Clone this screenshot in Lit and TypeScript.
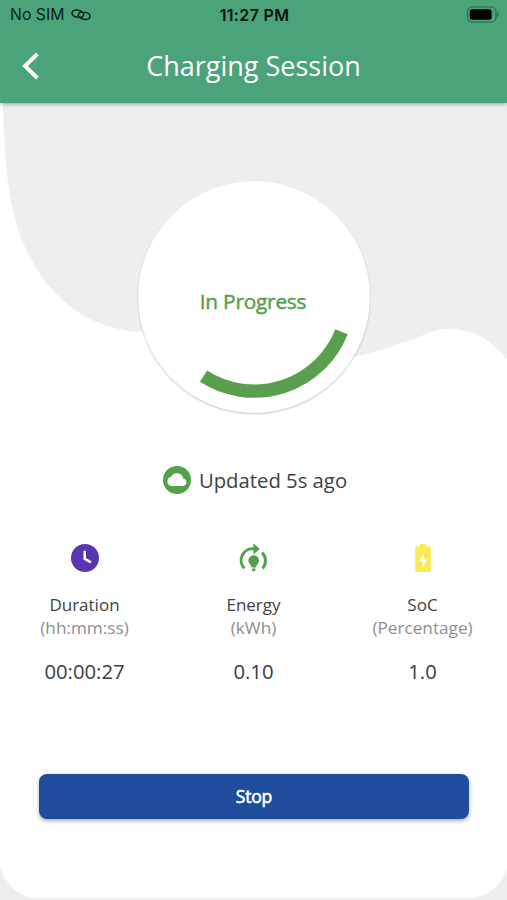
import { LitElement, html, css, svg } from "lit";
import { customElement, property } from "lit/decorators.js";

const clockIcon = svg`<circle cx="14" cy="14" r="14" fill="#5b35b0"/><path d="M13.700 6.800v8l6.200 3.600" fill="none" stroke="#fff" stroke-width="2.500"/>`;

const energyIcon = svg`<g fill="none" stroke="#549f49" stroke-width="3"><path d="M4.400 24.400A11.500 11.500 0 0 1 14.500 5"/><path d="M22 8.600A11.500 11.500 0 0 1 22.600 24.400"/></g><path d="M13.400-.8l6.400 5.700-6.400 5.700z" fill="#549f49"/><path d="M13.700 11.200a5.300 5.300 0 0 1 5.300 5.300c0 3.100-2.900 4.500-3.200 7.100h-4.200c-.3-2.600-3.200-4-3.200-7.100a5.300 5.300 0 0 1 5.300-5.300z" fill="#549f49"/><path d="M12 24.600h3.400v1.100a1.700 1.700 0 0 1-3.400 0z" fill="#549f49"/>`;

const batteryIcon = svg`<path d="M10.800 0h6v2.200h3.400a1.600 1.600 0 0 1 1.600 1.600v22.600a1.600 1.600 0 0 1-1.600 1.600H7.800a1.600 1.600 0 0 1-1.600-1.600V3.800a1.600 1.600 0 0 1 1.600-1.600h3z" fill="#fbea57"/><path d="M14.900 9.200v6.200h3.300l-4.800 8.500v-6.600H9.900z" fill="#fff"/>`;

@customElement("session-metric")
class SessionMetric extends LitElement {
  @property() label = "";
  @property() unit = "";
  @property() value = "";
  static styles = css`
    :host { display: flex; flex-direction: column; align-items: center; flex: 1; white-space: nowrap; }
    .label { margin-top: 20px; font-size: 17px; line-height: 23px; color: #424242; }
    .unit { font-size: 17.200px; line-height: 23px; color: #8e8e8e; }
    .value { margin-top: 17px; margin-bottom: 1px; font-size: 20.300px; line-height: 30px; color: #3c3c3c; }
    .icon { display: block; height: 29px; }
  `;
  render() {
    return html`<div class="icon"><slot></slot></div>
      <div class="label">${this.label}</div>
      <div class="unit">${this.unit}</div>
      <div class="value">${this.value}</div>`;
  }
}

@customElement("app-root")
class AppRoot extends LitElement {
  static styles = css`
    :host { display: block; font-family: "Open Sans", sans-serif; }
    * { box-sizing: border-box; }
    .screen { position: relative; isolation: isolate; height: 900px; overflow: hidden; background: #eee; display: flex; flex-direction: column; }
    .backdrop { position: absolute; inset: 0; z-index: -1; }
    header { height: 103px; flex: none; background: #4ba379; box-shadow: 0 1px 4px rgba(0,0,0,.35); }
    .status { height: 30px; display: grid; grid-template-columns: 1fr auto 1fr; align-items: center; padding: 0 8px 0 10px; font: 400 15.800px/30px Inter, sans-serif; color: #0b2419; }
    .carrier { display: flex; align-items: center; gap: 7px; }
    .time { font-weight: 600; font-size: 16px; letter-spacing: .35px; color: #06150e; }
    .battery { justify-self: end; display: block; transform: translateY(-1px); }
    .bar { height: 73px; padding-bottom: 2px; display: grid; grid-template-columns: 60px 1fr 60px; align-items: center; color: #fff; }
    .back { margin-left: 20px; display: block; }
    h1 { margin: 0; font-size: 27px; font-weight: 400; line-height: 36px; text-align: center; white-space: nowrap; }
    main { display: flex; flex-direction: column; flex: 1; }
    .dial { width: 232px; height: 232px; margin: 78px auto 0; border-radius: 50%; background: #fff; box-shadow: 0 1px 2px rgba(0,0,0,.24); display: grid; place-items: center; }
    .dial > * { grid-area: 1 / 1; }
    .state { padding-top: 8px; margin-left: -1px; font-size: 20.800px; letter-spacing: -.2px; line-height: 28px; color: #549f49; -webkit-text-stroke: .45px #549f49; }
    .updated { margin-top: 50px; height: 34px; display: flex; justify-content: center; align-items: center; gap: 8px; padding-left: 3px; font-size: 20.300px; line-height: 32px; color: #3f3f3f; }
    .updated span { padding-bottom: 1px; }
    .metrics { display: flex; margin-top: 47px; }
    svg { display: block; }
    .stop { margin: 87px 38px 0 39px; padding: 0 0 2px; height: 45px; border: 0; border-radius: 8px; background: #1f4c9c; color: #fff; font: 400 17.500px/24px "Open Sans", sans-serif; -webkit-text-stroke: .6px #fff; letter-spacing: -.2px; box-shadow: 0 2px 4px rgba(0,0,0,.32); }
  `;

  render() {
    return html`<div class="screen">
      <svg class="backdrop" width="507" height="900" viewBox="0 0 507 900">
        <path fill="#fff" d="M0 100H3C4 165 9 212 25 247C51 304 93 330 143 332C220 360 290 374 357 356C380 351 404 343 431 332Q450 325 474 333Q494 342 507 360V868C502 885 489 897 469 898H37C18 897 5 883 1 868H0Z"/>
      </svg>
      <header>
        <div class="status">
          <div class="carrier"><span>No SIM</span>
            <svg width="20" height="14" viewBox="0 0 20 14" fill="none" stroke="#0b2419" stroke-width="1.500" stroke-linecap="round">
              <path d="M6.500 9.200C3 9 .9 7 1 4.800C1.200 2.300 4.600 1.400 8.200 2.400C11.500 3.300 13.400 5.500 12.500 7.500C12 8.700 10.500 9.300 9 9.200"/>
              <path d="M13.500 4.200C17 4.400 19.100 6.500 19 8.600C18.800 11.200 15.400 12 11.800 11C8.500 10.100 6.600 8 7.500 6C8 4.800 9.500 4.200 11 4.300"/>
            </svg>
          </div>
          <span class="time">11:27 PM</span>
          <svg class="battery" width="33" height="17" viewBox="0 0 33 17">
            <rect x="1.500" y="1" width="28.500" height="15" rx="4.500" fill="none" stroke="#2c6b4d" stroke-width="1.200"/>
            <rect x="3.700" y="3.200" width="22" height="10.600" rx="2.500" fill="#000"/>
            <path d="M31.200 6v5q1.500-.8 1.500-2.500T31.200 6" fill="#2c6b4d"/>
          </svg>
        </div>
        <div class="bar">
          <svg class="back" width="20" height="28" viewBox="0 0 20 28" fill="none" stroke="#fff" stroke-width="3.900"><path d="M17.300 2L5 14l12.300 12"/></svg>
          <h1>Charging Session</h1>
        </div>
      </header>
      <main>
        <div class="dial">
          <svg width="232" height="232" viewBox="0.500 0 232 232"><path d="M204 150.700A93.700 93.700 0 0 1 66 195.200" fill="none" stroke="#5a9f4d" stroke-width="13.300"/></svg>
          <div class="state">In Progress</div>
        </div>
        <div class="updated">
          <svg width="28" height="28" viewBox="0 0 28 28"><circle cx="14" cy="14" r="14" fill="#549f49"/><path d="M8.600 19.900a4.500 4.500 0 0 1-.6-8.900 6.500 6.500 0 0 1 12.200 1.400 3.800 3.800 0 0 1-.1 7.500z" fill="#fff"/></svg>
          <span>Updated 5s ago</span>
        </div>
        <div class="metrics">
          <session-metric label="Duration" unit="(hh:mm:ss)" value="00:00:27"><svg width="28" height="28">${clockIcon}</svg></session-metric>
          <session-metric label="Energy" unit="(kWh)" value="0.10"><svg width="28" height="28" overflow="visible">${energyIcon}</svg></session-metric>
          <session-metric label="SoC" unit="(Percentage)" value="1.0"><svg width="28" height="28">${batteryIcon}</svg></session-metric>
        </div>
        <button class="stop">Stop</button>
      </main>
    </div>`;
  }
}
